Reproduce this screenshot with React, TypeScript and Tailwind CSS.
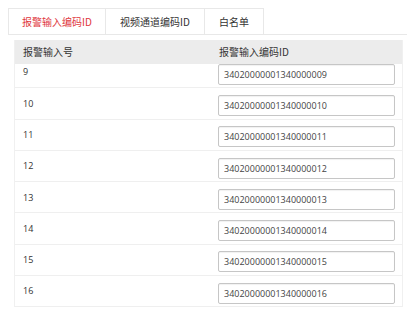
import { useState } from "react";

const tabs = ["报警输入编码ID", "视频通道编码ID", "白名单"];
const tabWidths = ["w-[98px]", "w-[100px]", "w-[60px]"];

const rows = Array.from({ length: 8 }, (_, i) => {
  const n = i + 9;
  return { no: n, id: `340200000013400000${String(n).padStart(2, "0")}` };
});

const cjk = "font-['Noto_Sans_CJK_SC','Noto_Sans',sans-serif]";
const num = "font-['Open_Sans','Noto_Sans',sans-serif]";

export default function App() {
  const [active, setActive] = useState(0);

  return (
    <div className="w-[412px] h-[313px] bg-white overflow-hidden text-[#333]">
      {/* Tab strip */}
      <div className="flex pt-2 pl-2 pr-[5px]">
        <div className="flex flex-1 border-b border-[#e8e8e8]">
          {tabs.map((t, i) => (
            <button
              key={t}
              onClick={() => setActive(i)}
              className={`${tabWidths[i]} h-[26px] -ml-px first:ml-0 border border-b-0 border-[#e8e8e8] bg-white text-[10px] leading-none ${cjk} ${
                active === i ? "text-[#e0363c]" : "text-[#333]"
              }`}
            >
              {t}
            </button>
          ))}
        </div>
      </div>

      {/* Table */}
      <div className="ml-[14px] mr-[9px] mt-[5px] border-l border-r border-[#f0f0f0]">
        <div className="flex h-[24px] items-center bg-[#ececec] text-[10px] leading-none">
          <div className={`w-[192px] pl-2 ${cjk}`}>报警输入号</div>
          <div className={`flex-1 pl-[12px] ${cjk}`}>报警输入编码ID</div>
        </div>
        <div className="h-[243px] overflow-hidden">
          <div className="-mt-[7px]">
            {rows.map((r) => (
              <div
                key={r.no}
                className="flex h-[31.3px] items-center border-b border-[#efefef]"
              >
                <div className={`w-[192px] pl-2 text-[9px] ${num}`}>{r.no}</div>
                <div className="flex-1 pl-[11px] pr-[7px]">
                  <input
                    readOnly
                    value={r.id}
                    className={`w-full h-[21px] rounded-[2px] border border-[#c6c6c6] px-[5px] text-[9px] text-[#444] shadow-[inset_0_1px_1px_rgba(0,0,0,0.06)] outline-none ${num}`}
                  />
                </div>
              </div>
            ))}
          </div>
        </div>
      </div>
    </div>
  );
}
